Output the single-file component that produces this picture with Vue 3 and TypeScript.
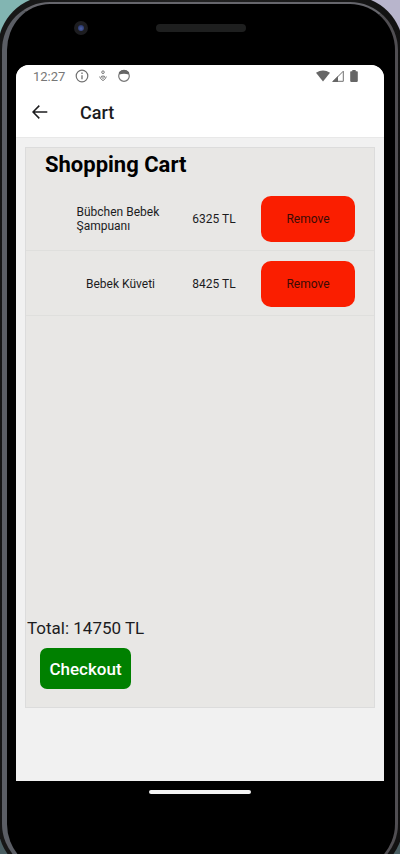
<script setup lang="ts">
import { computed, ref } from 'vue'

interface CartItem {
  id: number
  name: string
  price: number
}

const items = ref<CartItem[]>([
  { id: 1, name: 'Bübchen Bebek Şampuanı', price: 6325 },
  { id: 2, name: 'Bebek Küveti', price: 8425 },
])

const total = computed(() => items.value.reduce((sum, item) => sum + item.price, 0))

function remove(id: number): void {
  items.value = items.value.filter((item) => item.id !== id)
}
</script>

<template>
  <div class="stage">
    <div class="shell" aria-hidden="true"><div class="rim"></div></div>
    <div class="device">
      <div class="top-bezel" aria-hidden="true">
        <span class="camera"></span>
        <span class="speaker"></span>
      </div>

      <main class="screen">
        <div class="status">
          <span class="clock">12:27</span>
          <svg class="info" width="14" height="14" viewBox="0 0 14 14" fill="none" stroke="#707070">
            <circle cx="7" cy="7" r="5.8" stroke-width="1.2" />
            <path d="M7 6.2v4M7 3.6v1.4" stroke-width="1.3" />
          </svg>
          <svg class="care" width="8" height="12" viewBox="0 0 8 12" fill="none" stroke="#777">
            <circle cx="4" cy="2.2" r="1.3" />
            <path d="M4 8.600 2.500 7Q2.300 5.400 4 6.200 5.700 5.400 5.500 7ZM.7 6.500Q.8 8.600 4 10.600 7.200 8.600 7.300 6.500" />
          </svg>
          <svg class="face" width="14" height="14" viewBox="0 0 14 14">
            <circle cx="7" cy="7" r="5.3" fill="none" stroke="#777" stroke-width="1.2" />
            <path d="M1.800 3.200Q7-1.600 12.200 3.200L11.600 5.500Q7 4 2.400 5.500Z" fill="#666" />
          </svg>
          <span class="grow"></span>
          <svg width="14" height="12" viewBox="0 0 14 12"><path d="M0 2.800Q7-2 14 2.800L7 11.500Z" fill="#666" /></svg>
          <svg class="signal" width="12" height="12" viewBox="0 0 12 12">
            <path d="M1.200 11.300H11.300V1.200Z" fill="none" stroke="#707070" />
            <path d="M0 12 6 6v6Z" fill="#666" />
          </svg>
          <svg class="battery" width="8" height="12" viewBox="0 0 8 12"><path d="M2.300 0h3.400v1.300H7q.8 0 .8.800v9q0 .8-.8.800H1q-.8 0-.8-.8v-9q0-.8.8-.8h1.300Z" fill="#666" /></svg>
        </div>

        <header class="app-bar">
          <button class="back" type="button" aria-label="Back">
            <svg width="16" height="16" viewBox="0 0 16 16" fill="none" stroke="#1c1c1e" stroke-width="1.5">
              <path d="M15.300 8H1.300M7.300 1.600 1 8l6.300 6.400" />
            </svg>
          </button>
          <h1>Cart</h1>
        </header>

        <section class="cart">
          <h2>Shopping Cart</h2>
          <ul>
            <li v-for="item in items" :key="item.id">
              <span class="name">{{ item.name }}</span>
              <span class="price">{{ item.price }} TL</span>
              <button class="remove" type="button" @click="remove(item.id)">Remove</button>
            </li>
          </ul>
          <p class="total">Total: {{ total }} TL</p>
          <button class="checkout" type="button">Checkout</button>
        </section>
      </main>

      <div class="bottom-bezel" aria-hidden="true"><span class="home"></span></div>
    </div>
  </div>
</template>

<style>
body {
  margin: 0;
}
</style>

<style scoped>
.stage {
  position: relative;
  min-height: 100vh;
  overflow: hidden;
  background: linear-gradient(to bottom, transparent 50%, #4a5e62 90%), linear-gradient(to right, #82b5b2 10%, #b8b5cc 90%);
  font-family: Roboto, "Liberation Sans", sans-serif;
  color: #1c1c1e;
}

/* The handset runs slightly past the window on every side. */
.shell {
  position: absolute;
  inset: -4px -3px -22px -2px;
  box-sizing: border-box;
  padding: 6px 5px 4px 4px;
  border-radius: 52px;
  background: linear-gradient(to right, #161616, #222 50%, #111);
}

.rim {
  box-sizing: border-box;
  height: 100%;
  border-style: solid;
  border-width: 2px 3px 2px 5px;
  border-color: #66666c #504e52 #4c4c50 #5b5e65;
  border-radius: 48px;
  background: #000;
}

.device {
  position: relative;
  box-sizing: border-box;
  display: flex;
  flex-direction: column;
  min-height: 100vh;
  padding: 0 16px;
}

.top-bezel {
  display: grid;
  grid-template-columns: 1fr 90px 1fr;
  align-items: center;
  height: 65px;
  padding: 0 0 9px 2px;
  box-sizing: border-box;
}

.camera {
  width: 6px;
  height: 6px;
  margin-left: 56px;
  border: 4px solid #1d1d20;
  border-radius: 50%;
  background: radial-gradient(circle at 50% 60%, #4c60a4, #202a58);
}

.speaker {
  height: 8px;
  border-radius: 4px;
  background: #1e1f1f;
  grid-column: 2;
}

.screen {
  flex: 1;
  display: flex;
  flex-direction: column;
  border-radius: 13px 13px 0 0;
  background: #f1f1f1;
  overflow: hidden;
}

.status {
  display: flex;
  align-items: center;
  height: 22px;
  padding: 0 26px 0 17px;
  background: #fff;
  color: #777;
  font-size: 13px;
}

.info {
  margin-left: 10px;
}

.care {
  margin-left: 10px;
}

.face {
  margin-left: 10px;
}

.grow {
  flex: 1;
}

.signal {
  margin-left: 2px;
}

.battery {
  margin-left: 6px;
}

.app-bar {
  display: flex;
  align-items: center;
  gap: 32px;
  height: 51px;
  padding-left: 16px;
  border-bottom: 1px solid #e8e8e8;
  box-sizing: border-box;
  background: #fff;
}

button {
  border: 0;
  padding: 0;
  font-family: inherit;
}

.back {
  display: flex;
  background: none;
}

h1 {
  margin: 0;
  font-size: 18px;
  font-weight: 500;
}

.cart {
  flex: 1;
  display: flex;
  flex-direction: column;
  margin: 9px 9px 73px;
  border: 1px solid #dcdcdc;
  background: #e8e7e5;
}

h2 {
  margin: 0 0 0 19px;
  padding: 4px 0 8px;
  font-size: 22px;
  line-height: 26px;
  font-weight: 700;
  color: #000;
}

ul {
  flex: 1;
  margin: 0;
  padding: 0;
  list-style: none;
}

li {
  display: grid;
  grid-template-columns: 1fr 88px 94px;
  align-items: center;
  height: 65px;
  padding: 2px 19px 0 42px;
  border-bottom: 1px solid #dfdfdd;
  box-sizing: border-box;
  font-size: 12px;
  line-height: 14px;
}

.name {
  justify-self: center;
  max-width: 88px;
}

.price {
  justify-self: center;
  margin-right: 6px;
}

.remove {
  height: 46px;
  border-radius: 10px;
  background: #fa1e00;
  color: #3c0b05;
  font-size: 12px;
}

.total {
  margin: 0 0 10px 1px;
  font-size: 17px;
  line-height: 20px;
}

.checkout {
  align-self: flex-start;
  width: 91px;
  height: 41px;
  margin: 0 0 18px 14px;
  border-radius: 7px;
  background: #008000;
  color: #fff;
  font-size: 17px;
  font-weight: 500;
}

.bottom-bezel {
  height: 73px;
  padding-top: 9px;
  box-sizing: border-box;
}

.home {
  display: block;
  width: 102px;
  height: 4px;
  margin: 0 auto;
  border-radius: 2px;
  background: #f4f4f4;
}
</style>
